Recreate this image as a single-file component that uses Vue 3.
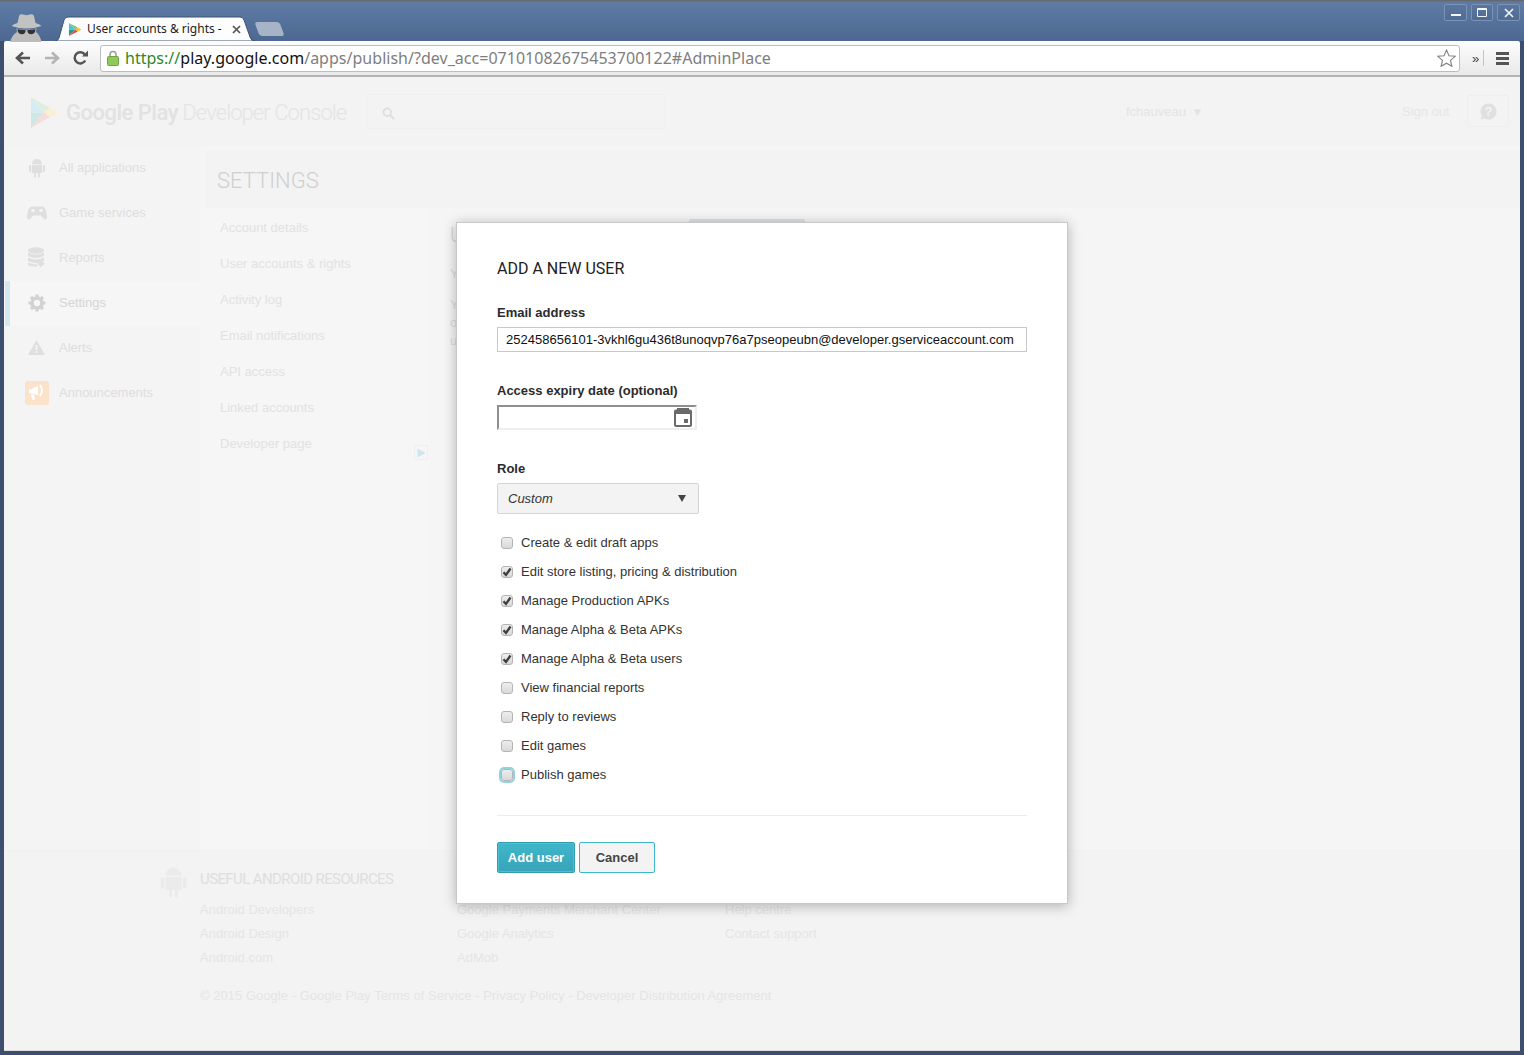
<script setup>
const sideItems = [
  { label: 'All applications', icon: 'android' },
  { label: 'Game services', icon: 'game' },
  { label: 'Reports', icon: 'reports' },
  { label: 'Settings', icon: 'gear', active: true },
  { label: 'Alerts', icon: 'alert' },
  { label: 'Announcements', icon: 'announce' }
]
const subNav = ['Account details', 'User accounts & rights', 'Activity log', 'Email notifications', 'API access', 'Linked accounts', 'Developer page']
const perms = [
  { label: 'Create & edit draft apps', on: false },
  { label: 'Edit store listing, pricing & distribution', on: true },
  { label: 'Manage Production APKs', on: true },
  { label: 'Manage Alpha & Beta APKs', on: true },
  { label: 'Manage Alpha & Beta users', on: true },
  { label: 'View financial reports', on: false },
  { label: 'Reply to reviews', on: false },
  { label: 'Edit games', on: false },
  { label: 'Publish games', on: false, focus: true }
]
const footerCols = [
  ['Android Developers', 'Android Design', 'Android.com'],
  ['Google Payments Merchant Center', 'Google Analytics', 'AdMob'],
  ['Help centre', 'Contact support']
]
</script>

<template>
  <div class="window">
    <div class="titlebar">
      <svg class="incognito" width="33" height="29" viewBox="0 0 33 29">
        <path d="M7.5 10 L9 3 Q9.5 0.8 12 1.3 L16.5 2.2 L21 1.3 Q23.5 0.8 24 3 L25.5 10 Q29.5 11 31.5 13 Q24 15.5 16.5 15.5 Q9 15.5 1.5 13 Q3.5 11 7.5 10Z" fill="#c2c2c2"/>
        <path d="M6.5 15.5 Q16.5 18 26.5 15.5 L26 19 Q30 22 31.5 29 L0 29 Q2 22 7 19Z" fill="#bcbcbc"/>
        <path d="M7.5 16.3 L15.8 17.2 Q15.3 21.5 11.5 21.2 Q7.5 21 7.5 16.3Z M17.2 17.2 L25.5 16.3 Q25.5 21 21.5 21.2 Q17.7 21.5 17.2 17.2Z" fill="#333"/>
      </svg>
      <div class="tab">
        <svg class="tab-bg" width="200" height="25" viewBox="0 0 200 25">
          <path d="M0 25 Q3 25 4 22 L9 4 Q10 1 13 1 L185 1 Q188 1 189 4 L195 21 Q196 25 200 25Z" fill="#fdfdfd" stroke="#3f5475" stroke-width="1"/>
        </svg>
        <svg class="play" width="14" height="15" viewBox="0 0 15 15">
          <path d="M1 0.5 L1 8 L8 7.5Z" fill="#4cc3dc"/>
          <path d="M1 0.5 L8 7.5 L10.5 5.4Z" fill="#7cc576"/>
          <path d="M1 14.5 L1 8 L8 7.5Z" fill="#1f9d92"/>
          <path d="M1 14.5 L8 7.5 L10.5 9.6Z" fill="#e8483f"/>
          <path d="M8 7.5 L10.5 5.4 L14.5 7.5 L10.5 9.6Z" fill="#fbc02d"/>
        </svg>
        <span class="tab-title">User accounts &amp; rights -</span>
        <svg class="tab-close" width="9" height="9" viewBox="0 0 9 9"><path d="M1 1 L8 8 M8 1 L1 8" stroke="#555" stroke-width="1.7"/></svg>
      </div>
      <div class="newtab"></div>
      <div class="winbtns">
        <div class="winbtn wide"><i class="w-min"></i></div>
        <div class="winbtn"><i class="w-max"></i></div>
        <div class="winbtn wide">
          <svg width="10" height="10" viewBox="0 0 10 10"><path d="M1 1 L9 9 M9 1 L1 9" stroke="#f2f5f9" stroke-width="1.6"/></svg>
        </div>
      </div>
    </div>

    <div class="toolbar">
      <svg class="tool" width="18" height="16" viewBox="0 0 18 16"><path d="M16 8 H4 M9 2.5 L3 8 L9 13.5" fill="none" stroke="#555" stroke-width="2.6"/></svg>
      <svg class="tool" width="18" height="16" viewBox="0 0 18 16"><path d="M2 8 H14 M9 2.5 L15 8 L9 13.5" fill="none" stroke="#b4b4b4" stroke-width="2.6"/></svg>
      <svg class="tool" width="18" height="16" viewBox="0 0 18 16"><path d="M13.2 10.5 A5.6 5.6 0 1 1 12.8 4.5" fill="none" stroke="#555" stroke-width="2.5"/><path d="M10 6.4 H16 V0.6Z" fill="#555"/></svg>
      <div class="omnibox">
        <svg class="lock" width="12" height="16" viewBox="0 0 12 16">
          <path d="M3 7 V4.5 A3 3 0 0 1 9 4.5 V7" fill="none" stroke="#9a9a9a" stroke-width="1.5"/>
          <rect x="0.5" y="6.5" width="11" height="9" rx="1" fill="#8fc95a" stroke="#6fa53f"/>
        </svg>
        <div class="url"><span class="u-scheme">https://</span><span class="u-host">play.google.com</span><span class="u-path">/apps/publish/?dev_acc=07101082675453700122#AdminPlace</span></div>
        <svg class="star" width="19" height="18" viewBox="0 0 19 18"><path d="M9.5 1 L12 6.7 L18.2 7.3 L13.5 11.4 L14.9 17.3 L9.5 14.2 L4.1 17.3 L5.5 11.4 L0.8 7.3 L7 6.7Z" fill="#fff" stroke="#808080" stroke-width="1.1"/></svg>
      </div>
      <span class="chev">»</span>
      <i class="sep"></i>
      <div class="burger"><i></i><i></i><i></i></div>
    </div>

    <div class="page">
      <div class="head">
        <svg class="logo" width="29" height="31" viewBox="0 0 29 31">
          <path d="M1 0 V15.5 L14 15.5Z" fill="#d5edf2"/>
          <path d="M1 0 L14 15.5 L20 11Z" fill="#dfeedd"/>
          <path d="M1 31 V15.5 L14 15.5Z" fill="#cfe8e6"/>
          <path d="M1 31 L14 15.5 L20 20Z" fill="#f6dcda"/>
          <path d="M14 15.5 L20 11 L28.5 15.5 L20 20Z" fill="#f9efd2"/>
        </svg>
        <div class="brand"><b>Google Play</b> Developer Console</div>
        <div class="search">
          <svg width="13" height="13" viewBox="0 0 13 13"><circle cx="5.2" cy="5.2" r="3.8" fill="none" stroke="#dedede" stroke-width="1.8"/><path d="M8 8 L12 12" stroke="#dedede" stroke-width="2"/></svg>
        </div>
        <div class="account">fchauveau <span class="caret">▼</span></div>
        <div class="signout">Sign out</div>
        <div class="helpbox">
          <svg width="17" height="17" viewBox="0 0 17 17"><path d="M8.5 0.5 A8 8 0 1 1 4.5 15.4 L0.8 16.4 L1.8 12.7 A8 8 0 0 1 8.5 0.5Z" fill="#e0e0e0"/><text x="8.5" y="13" text-anchor="middle" class="q">?</text></svg>
        </div>
      </div>

      <div class="body">
        <nav class="side">
          <div v-for="it in sideItems" :key="it.label" class="side-row" :class="{ active: it.active }">
            <span class="side-ic">
              <svg v-if="it.icon === 'android'" width="16" height="20" viewBox="0 0 16 20" fill="#dfdfdf">
                <path d="M3 6 A5 5 0 0 1 13 6Z"/><path d="M3 6.8 H13 V15 H10.8 V19.5 H9 V15 H7 V19.5 H5.2 V15 H3Z"/><rect x="0" y="7" width="2.2" height="7" rx="1"/><rect x="13.8" y="7" width="2.2" height="7" rx="1"/>
              </svg>
              <svg v-else-if="it.icon === 'game'" width="20" height="14" viewBox="0 0 20 14" fill="#dfdfdf">
                <path d="M5 0.5 H15 Q18 0.5 19 5 L20 11 Q20 14 17.5 13.5 L13.5 9.5 H6.5 L2.5 13.5 Q0 14 0 11 L1 5 Q2 0.5 5 0.5Z"/><circle cx="6" cy="4.5" r="1.8" fill="#f4f4f4"/><circle cx="14" cy="4.5" r="1.8" fill="#f4f4f4"/>
              </svg>
              <svg v-else-if="it.icon === 'reports'" width="17" height="21" viewBox="0 0 17 21" fill="#dfdfdf">
                <ellipse cx="8" cy="3.5" rx="8" ry="3.2"/><path d="M0 5.5 Q8 9.5 16 5.5 V9 Q8 13 0 9Z M0 10.5 Q8 14.5 16 10.5 V14 Q8 18 0 14Z M0 15.5 Q6 18 10 17.5 L9 19.5 Q3 20 0 18Z"/><path d="M11 13 H15 V16 H17 L13 20.5 L9 16 H11Z"/>
              </svg>
              <svg v-else-if="it.icon === 'gear'" width="18" height="18" viewBox="0 0 18 18">
                <circle cx="9" cy="9" r="5" fill="none" stroke="#d2d2d2" stroke-width="3.6"/>
                <path d="M9 0.5 V17.5 M0.5 9 H17.5 M3 3 L15 15 M15 3 L3 15" stroke="#d2d2d2" stroke-width="3.2" stroke-dasharray="3 11"/>
              </svg>
              <svg v-else-if="it.icon === 'alert'" width="17" height="15" viewBox="0 0 17 15">
                <path d="M8.5 0 L17 15 H0Z" fill="#dfdfdf"/><rect x="7.6" y="5" width="1.8" height="5" fill="#f4f4f4"/><rect x="7.6" y="11" width="1.8" height="2" fill="#f4f4f4"/>
              </svg>
              <span v-else class="announce">
                <svg width="18" height="17" viewBox="0 0 18 17" fill="#fff">
                  <path d="M1 6 L10 2 V11 L1 9Z"/><path d="M3 10 L6 11 L7 16 L4 15.5Z"/><path d="M12 1 Q16 6 12 12" fill="none" stroke="#fff" stroke-width="2"/>
                </svg>
              </span>
            </span>
            <span class="side-label">{{ it.label }}</span>
          </div>
        </nav>

        <main class="main">
          <div class="main-head">SETTINGS</div>
          <div class="main-body">
            <div class="subnav">
              <div v-for="s in subNav" :key="s" class="sub-row">{{ s }}</div>
              <div class="collapse">
                <svg width="9" height="10" viewBox="0 0 9 10"><path d="M0.5 0.5 L8.5 5 L0.5 9.5Z" fill="#cfe6ee"/></svg>
              </div>
            </div>
            <div class="content">
              <div class="content-top">
                <div class="c-title">U</div>
                <div class="invite"></div>
              </div>
              <div class="c-text first">Y</div>
              <div class="c-text">Y</div>
              <div class="c-text">o</div>
              <div class="c-text">u</div>
            </div>
          </div>
        </main>
      </div>

      <footer class="foot">
        <svg class="foot-android" width="27" height="32" viewBox="0 0 16 20" fill="#ebebeb">
          <path d="M3 6 A5 5 0 0 1 13 6Z"/><path d="M3 6.8 H13 V15 H10.8 V19.5 H9 V15 H7 V19.5 H5.2 V15 H3Z"/><rect x="0" y="7" width="2.2" height="7" rx="1"/><rect x="13.8" y="7" width="2.2" height="7" rx="1"/>
        </svg>
        <div class="foot-main">
          <div class="foot-title">USEFUL ANDROID RESOURCES</div>
          <div class="foot-cols">
            <div v-for="(c, i) in footerCols" :key="i" class="foot-col" :class="'col' + i">
              <div v-for="l in c" :key="l" class="foot-link">{{ l }}</div>
            </div>
          </div>
          <div class="copy">© 2015 Google - Google Play Terms of Service - Privacy Policy - Developer Distribution Agreement</div>
        </div>
      </footer>

      <div class="modal">
        <h2 class="m-title">ADD A NEW USER</h2>
        <label class="m-label">Email address</label>
        <div class="m-input">252458656101-3vkhl6gu436t8unoqvp76a7pseopeubn@developer.gserviceaccount.com</div>
        <label class="m-label gap">Access expiry date (optional)</label>
        <div class="m-date">
          <svg width="18" height="19" viewBox="0 0 18 19">
            <path d="M3 0 H15 V1.5 H16 Q18 1.5 18 3.5 V17 Q18 19 16 19 H2 Q0 19 0 17 V3.5 Q0 1.5 2 1.5 H3Z" fill="#6a6a6a"/>
            <rect x="2" y="6" width="14" height="11" fill="#fff"/>
            <rect x="10" y="11" width="4" height="4" fill="#6a6a6a"/>
          </svg>
        </div>
        <label class="m-label gap2">Role</label>
        <div class="m-select"><em>Custom</em><i class="tri"></i></div>
        <div class="perms">
          <div v-for="p in perms" :key="p.label" class="perm">
            <span class="cb" :class="{ focus: p.focus }">
              <svg v-if="p.on" width="10" height="10" viewBox="0 0 10 10"><path d="M1.5 5.2 L4 8 L8.5 1.5" fill="none" stroke="#3f3f3f" stroke-width="2.3"/></svg>
            </span>
            <span class="perm-label">{{ p.label }}</span>
          </div>
        </div>
        <div class="m-rule"></div>
        <div class="m-actions">
          <button class="btn primary" type="button">Add user</button>
          <button class="btn" type="button">Cancel</button>
        </div>
      </div>
    </div>
  </div>
</template>

<style>
html, body { margin: 0; background: #3b4e6b; }
</style>

<style scoped>
.window {
  position: relative;
  width: 1524px;
  height: 1055px;
  overflow: hidden;
  box-sizing: border-box;
  padding: 0 4px 4px 4px;
  background: #3d4f6c;
  font-family: "Liberation Sans", Arial, sans-serif;
  display: flex;
  flex-direction: column;
}
.titlebar {
  position: relative;
  flex: 0 0 41px;
  margin: 0 -4px;
  background: linear-gradient(#666a70 0, #666a70 1px, #607ba3 2px, #5876a0 14px, #4d6890 41px);
  display: flex;
  align-items: flex-end;
}
.incognito { position: absolute; left: 10px; top: 13px; }
.tab {
  position: absolute;
  left: 55px;
  top: 16px;
  width: 200px;
  height: 25px;
  display: flex;
  align-items: center;
}
.tab-bg { position: absolute; left: 0; top: 0; }
.play { position: absolute; left: 13px; top: 6px; }
.tab-title {
  position: absolute;
  left: 32px;
  top: 4px;
  font: 12px/17px "Noto Sans", sans-serif;
  color: #222;
  white-space: nowrap;
}
.tab-close { position: absolute; left: 177px; top: 9px; }
.newtab {
  position: absolute;
  left: 257px;
  top: 22px;
  width: 25px;
  height: 14px;
  background: #a7b4c8;
  border-radius: 3px;
  transform: skewX(20deg);
}
.winbtns {
  position: absolute;
  right: 4px;
  top: 4px;
  display: flex;
  gap: 4px;
}
.winbtn {
  width: 20px;
  height: 15px;
  border: 1px solid #7d93b4;
  border-radius: 2px;
  background: linear-gradient(#5b77a0, #4f6b93);
  display: flex;
  align-items: center;
  justify-content: center;
}
.winbtn.wide { width: 21px; }
.w-min { width: 10px; height: 2px; margin-top: 4px; background: #f2f5f9; }
.w-max { width: 8px; height: 6px; border: 1px solid #f2f5f9; border-top-width: 2px; border-radius: 1px; }
.toolbar {
  flex: 0 0 36px;
  box-sizing: border-box;
  display: flex;
  align-items: center;
  background: linear-gradient(#fdfdfd, #e9e9e9);
  border-bottom: 2px solid #b4b4b4;
  border-radius: 2px 2px 0 0;
  padding: 0 10px;
}
.tool { margin-right: 11px; flex: none; }
.omnibox {
  flex: none;
  width: 1360px;
  height: 27px;
  margin-left: -1px;
  box-sizing: border-box;
  background: #fff;
  border: 1px solid #bdbdbd;
  border-radius: 3px;
  display: flex;
  align-items: center;
  padding: 0 3px 0 6px;
}
.lock { flex: none; margin-right: 6px; }
.url {
  flex: 1;
  font: 16px/24px "Noto Sans", sans-serif;
  letter-spacing: 0.02px;
  white-space: nowrap;
}
.u-scheme { color: #2f8a1e; }
.u-host { color: #111; }
.u-path { color: #7e7e7e; }
.chev { margin-left: 12px; font: 13px "Liberation Sans", sans-serif; color: #444; }
.sep { width: 1px; height: 16px; margin-left: 4px; background: #c4c4c4; }
.burger { margin-left: 12px; width: 13px; display: flex; flex-direction: column; gap: 2px; }
.burger i { height: 3px; background: #555; display: block; }
.page {
  position: relative;
  flex: 1;
  background: #f3f3f3;
  display: flex;
  flex-direction: column;
  border-bottom: 1px solid #ddd;
}
.head {
  flex: 0 0 69px;
  position: relative;
  display: flex;
  align-items: flex-start;
}
.logo { margin: 20px 0 0 26px; flex: none; }
.brand {
  margin: 21px 0 0 7px;
  width: 300px;
  font: 300 22px/30px Roboto, sans-serif;
  color: #e4e4e4;
  letter-spacing: -0.92px;
  white-space: nowrap;
}
.brand b { font-weight: 500; color: #e2e2e2; letter-spacing: -0.5px; }
.search {
  box-sizing: border-box;
  margin: 17px 0 0 0;
  width: 300px;
  height: 35px;
  border: 1px solid #efefef;
  padding: 11px 0 0 15px;
}
.account { margin: 26px 0 0 460px; width: 276px; font-size: 13px; line-height: 17px; color: #e4e4e4; white-space: nowrap; }
.caret { font-size: 12px; margin-left: 2px; }
.signout { margin-top: 26px; width: 65px; font-size: 13px; line-height: 17px; color: #e6e6e6; }
.helpbox {
  box-sizing: border-box;
  width: 42px;
  height: 32px;
  margin-top: 18px;
  border: 1px solid #eeeeee;
  display: flex;
  align-items: center;
  justify-content: center;
}
.q { font: bold 13px "Liberation Sans", sans-serif; fill: #f3f3f3; }
.body { display: flex; flex: 0 0 704px; }
.side { flex: 0 0 196px; background: #f4f4f4; }
.side-row {
  box-sizing: border-box;
  height: 45px;
  padding-bottom: 2px;
  display: flex;
  align-items: center;
  position: relative;
  font-size: 13px;
  color: #dedede;
}
.side-row.active { background: #f6f6f6; color: #d5d5d5; }
.side-row.active::before {
  content: "";
  position: absolute;
  left: 1px;
  top: 0;
  bottom: 0;
  width: 5px;
  background: #d5e8ef;
}
.side-ic { width: 55px; flex: none; display: flex; justify-content: center; padding-left: 11px; padding-right: 1px; box-sizing: border-box; }
.announce {
  width: 24px;
  height: 24px;
  border-radius: 2px;
  background: #fbe3cb;
  display: flex;
  align-items: center;
  justify-content: center;
  flex: none;
}
.main { flex: 1; background: #f5f5f5; }
.main-head {
  box-sizing: border-box;
  height: 58px;
  margin: 4px 0 0 5px;
  padding: 17px 0 0 12px;
  background: #f3f3f3;
  font: 300 22px/28px Roboto, sans-serif;
  color: #cfcfcf;
}
.main-body { display: flex; }
.subnav { position: relative; flex: 0 0 230px; padding: 2px 0 0 20px; box-sizing: border-box; background: #f6f6f6; height: 642px; }
.sub-row { height: 36px; line-height: 36px; font-size: 13px; color: #e2e2e2; }
.collapse {
  position: absolute;
  right: 2px;
  top: 237px;
  width: 14px;
  height: 15px;
  border: 1px solid #efefef;
  box-sizing: border-box;
  display: flex;
  align-items: center;
  justify-content: center;
}
.content { flex: 1; padding: 11px 0 0 20px; overflow: hidden; }
.content-top { display: flex; align-items: flex-start; }
.c-title { width: 6px; margin-right: 233px; font: 300 20px/30px Roboto, sans-serif; color: #d6d6d6; margin-top: 1px; }
.invite { width: 116px; height: 30px; background: #d5e4e8; border-radius: 2px 2px 0 0; }
.c-text { width: 6px; font-size: 13px; line-height: 18px; color: #dcdcdc; }
.c-text.first { margin-top: 15px; margin-bottom: 13px; }
.foot {
  flex: 1;
  display: flex;
  background: #f3f3f3;
  border-top: 1px solid #f0f0f0;
}
.foot-android { margin: 15px 13px 0 156px; flex: none; }
.foot-main { flex: 1; padding-top: 18px; }
.foot-title { font: 400 15px/21px Roboto, sans-serif; color: #dedede; letter-spacing: -0.6px; }
.foot-cols { display: flex; margin-top: 8px; height: 72px; }
.foot-col { flex: none; }
.col0 { width: 257px; }
.col1 { width: 268px; }
.foot-link { height: 24px; line-height: 24px; font-size: 13px; color: #e5e5e5; white-space: nowrap; }
.copy { margin-top: 16px; font-size: 13px; line-height: 20px; color: #e5e5e5; letter-spacing: 0.03px; }
.modal {
  position: absolute;
  left: 452px;
  top: 145px;
  width: 612px;
  height: 682px;
  box-sizing: border-box;
  background: #fff;
  border: 1px solid #c8c8c8;
  box-shadow: 0 2px 12px rgba(0, 0, 0, 0.28);
  padding: 35px 40px 0 40px;
  display: flex;
  flex-direction: column;
  color: #333;
}
.m-title { margin: 0; font: 400 16px/22px Roboto, sans-serif; color: #222; }
.m-label { display: block; font-size: 13px; line-height: 16px; font-weight: 700; color: #2b2b2b; margin-top: 25px; }
.m-label.gap { margin-top: 31px; }
.m-label.gap2 { margin-top: 31px; }
.m-input {
  box-sizing: border-box;
  margin-top: 6px;
  height: 25px;
  border: 1px solid #c9c9c9;
  padding: 0 8px;
  font-size: 13px;
  line-height: 23px;
  letter-spacing: 0.013px;
  color: #111;
  white-space: nowrap;
}
.m-date {
  box-sizing: border-box;
  margin-top: 6px;
  width: 200px;
  height: 25px;
  border: 2px solid;
  border-color: #8e8e8e #eeeeee #eeeeee #8e8e8e;
  display: flex;
  justify-content: flex-end;
  padding-right: 3px;
  align-items: center;
}
.m-select {
  box-sizing: border-box;
  margin-top: 6px;
  width: 202px;
  height: 31px;
  background: #f3f3f3;
  border: 1px solid #d5d5d5;
  border-radius: 2px;
  padding: 0 12px 0 10px;
  display: flex;
  align-items: center;
  justify-content: space-between;
  font-size: 13px;
  color: #333;
}
.tri { width: 0; height: 0; border-left: 4px solid transparent; border-right: 4px solid transparent; border-top: 7px solid #444; }
.perms { margin-top: 14px; }
.perm { height: 29px; display: flex; align-items: center; }
.cb {
  box-sizing: border-box;
  width: 12px;
  height: 12px;
  margin: 0 8px 0 4px;
  border: 1px solid #b4b4b4;
  border-radius: 3px;
  background: linear-gradient(#ededed, #d9d9d9);
  display: flex;
  align-items: center;
  justify-content: center;
}
.cb.focus { box-shadow: 0 0 0 2px #8fd4de; }
.perm-label { font-size: 13px; color: #333; }
.m-rule { margin-top: 26px; height: 1px; background: #ececec; }
.m-actions { margin-top: 26px; display: flex; gap: 4px; }
.btn {
  box-sizing: border-box;
  height: 31px;
  width: 76px;
  padding: 0;
  border: 1px solid #3eb6cb;
  border-radius: 2px;
  background: #f3f3f3;
  font: bold 13px "Liberation Sans", sans-serif;
  color: #444;
}
.btn.primary {
  width: 78px;
  background: linear-gradient(#40b6ca, #38a4b8);
  border-color: #2f9db2;
  box-shadow: inset 0 0 0 1px #4cbfd2;
  color: #fff;
}
</style>
